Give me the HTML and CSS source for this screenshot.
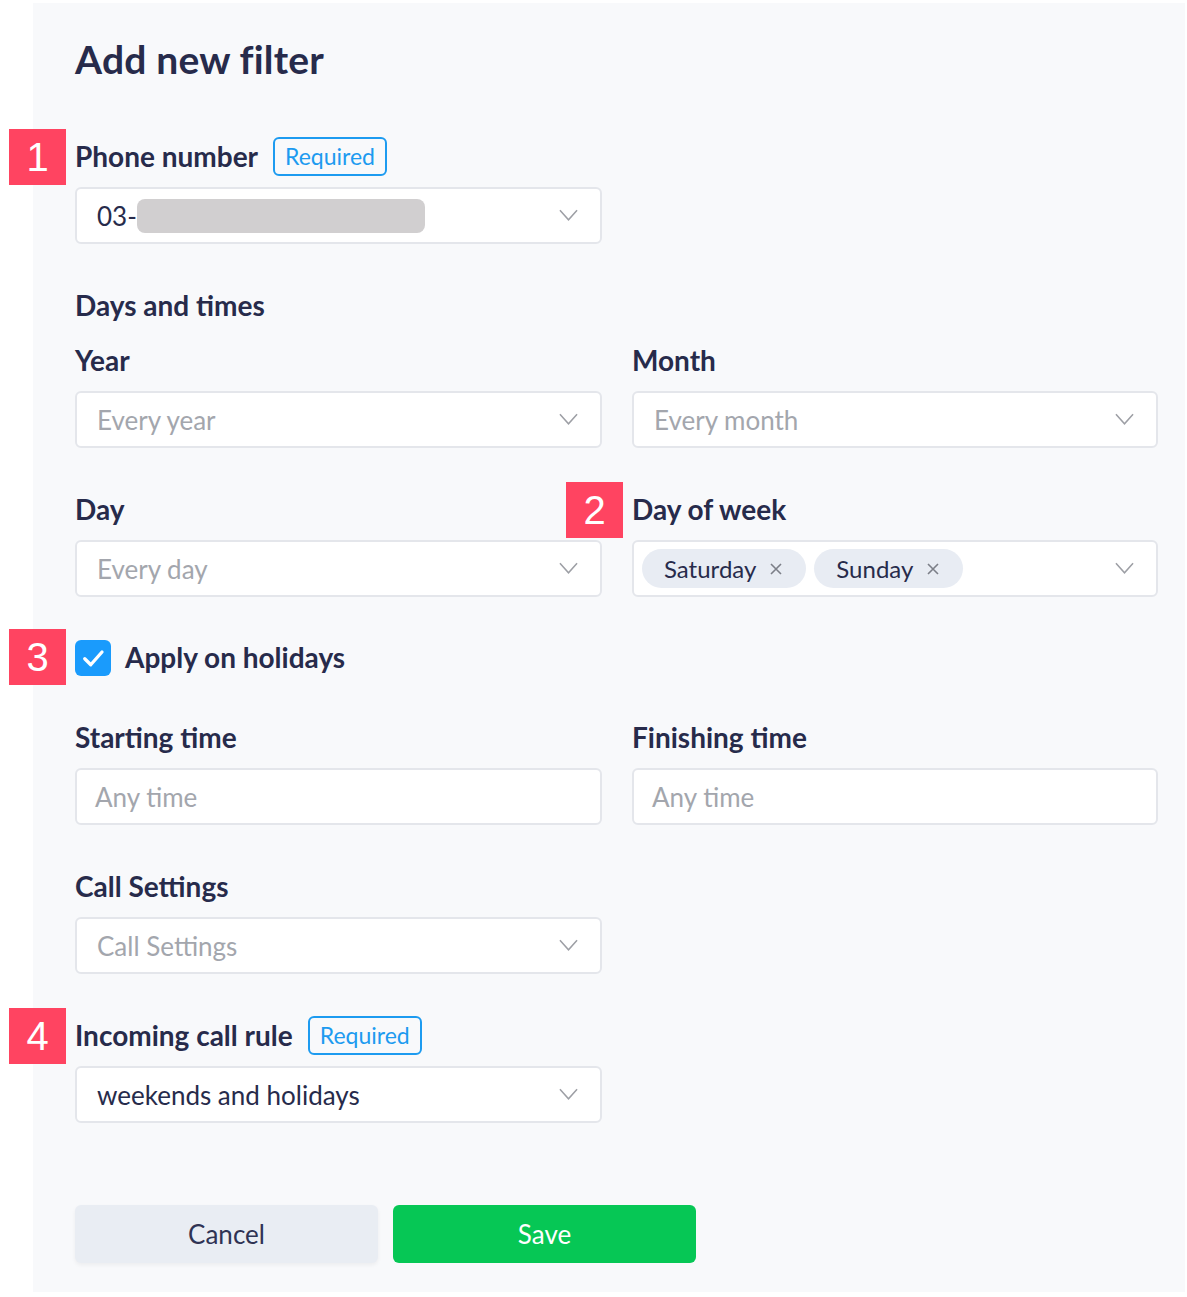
FILE: index.html
```html
<!DOCTYPE html>
<html lang="en">
<head>
    <meta charset="UTF-8">
    <meta name="viewport" content="width=device-width, initial-scale=1.0">
    <title>Add new filter</title>
    <link rel="stylesheet" href="styles.css">
</head>
<body>

    <div class="panel">
        <h1 class="title">Add new filter</h1>

        <div class="form">
            <div class="row">
                <div class="field">
                    <div class="label"><span class="marker">1</span>Phone number <span class="required">Required</span></div>
                    <div class="select">
                        <span class="value">03-</span><span class="masked"></span>
                        <svg class="chevron" viewBox="0 0 20 12"><path d="M1 1l9 10 9-10"/></svg>
                    </div>
                </div>
            </div>

            <div class="group">
                <div class="section">Days and times</div>
                <div class="row">
                    <div class="field">
                        <div class="label">Year</div>
                        <div class="select">
                            <span class="placeholder">Every year</span>
                            <svg class="chevron" viewBox="0 0 20 12"><path d="M1 1l9 10 9-10"/></svg>
                        </div>
                    </div>
                    <div class="field">
                        <div class="label">Month</div>
                        <div class="select">
                            <span class="placeholder">Every month</span>
                            <svg class="chevron" viewBox="0 0 20 12"><path d="M1 1l9 10 9-10"/></svg>
                        </div>
                    </div>
                </div>
            </div>

            <div class="row">
                <div class="field">
                    <div class="label">Day</div>
                    <div class="select">
                        <span class="placeholder">Every day</span>
                        <svg class="chevron" viewBox="0 0 20 12"><path d="M1 1l9 10 9-10"/></svg>
                    </div>
                </div>
                <div class="field">
                    <div class="label"><span class="marker">2</span>Day of week</div>
                    <div class="select tags">
                        <span class="tag">Saturday <svg class="close" viewBox="0 0 12 12"><path d="M1 1l10 10M11 1L1 11"/></svg></span>
                        <span class="tag">Sunday <svg class="close" viewBox="0 0 12 12"><path d="M1 1l10 10M11 1L1 11"/></svg></span>
                        <svg class="chevron" viewBox="0 0 20 12"><path d="M1 1l9 10 9-10"/></svg>
                    </div>
                </div>
            </div>

            <div class="check-row">
                <span class="marker">3</span>
                <span class="checkbox">
                    <svg viewBox="0 0 20 20"><path d="M4.5 10.5l4 4 7.5-8.5"/></svg>
                </span>
                <span class="check-label">Apply on holidays</span>
            </div>

            <div class="row">
                <div class="field">
                    <div class="label">Starting time</div>
                    <div class="input"><span class="placeholder">Any time</span></div>
                </div>
                <div class="field">
                    <div class="label">Finishing time</div>
                    <div class="input"><span class="placeholder">Any time</span></div>
                </div>
            </div>

            <div class="row">
                <div class="field">
                    <div class="label">Call Settings</div>
                    <div class="select">
                        <span class="placeholder">Call Settings</span>
                        <svg class="chevron" viewBox="0 0 20 12"><path d="M1 1l9 10 9-10"/></svg>
                    </div>
                </div>
            </div>

            <div class="row">
                <div class="field">
                    <div class="label"><span class="marker">4</span>Incoming call rule <span class="required">Required</span></div>
                    <div class="select">
                        <span class="value">weekends and holidays</span>
                        <svg class="chevron" viewBox="0 0 20 12"><path d="M1 1l9 10 9-10"/></svg>
                    </div>
                </div>
            </div>
        </div>

        <div class="actions">
            <button class="btn cancel">Cancel</button>
            <button class="btn save">Save</button>
        </div>
    </div>

</body>
</html>
```

FILE: styles.css
```css
body {
    margin: 0;
    background: #ffffff;
    font-family: Lato, "Noto Sans", sans-serif;
    color: #272b4b;
}

.panel {
    margin: 3px 2px 4px 33px;
    padding: 34px 27px 29px 42px;
    background: #f8f9fb;
}

.title {
    margin: 0 0 57px 0;
    font-size: 39px;
    line-height: 44px;
    font-weight: 700;
    letter-spacing: 0.2px;
}

.form {
    display: flex;
    flex-direction: column;
    gap: 43px;
}

.group {
    display: flex;
    flex-direction: column;
    gap: 15px;
}

.section {
    font-size: 28px;
    line-height: 36px;
    padding-bottom: 4px;
    font-weight: 700;
}

.row {
    display: grid;
    grid-template-columns: 527px 526px;
    gap: 30px;
}

.field {
    display: flex;
    flex-direction: column;
    gap: 9px;
}

.label {
    position: relative;
    display: flex;
    align-items: center;
    height: 36px;
    padding-bottom: 4px;
    font-size: 28px;
    font-weight: 700;
}

.required {
    margin-left: 15px;
    height: 35px;
    padding: 0 10px;
    display: flex;
    align-items: center;
    border: 2px solid #1d9bf0;
    border-radius: 6px;
    color: #1d9bf0;
    font-size: 23px;
    font-weight: 400;
}

.marker {
    position: absolute;
    left: -66px;
    top: -9px;
    width: 57px;
    height: 56px;
    display: flex;
    align-items: center;
    justify-content: center;
    background: #ff4461;
    color: #ffffff;
    font-family: "Liberation Sans", Arial, sans-serif;
    font-size: 40px;
    font-weight: 400;
}

.select, .input {
    position: relative;
    height: 57px;
    box-sizing: border-box;
    display: flex;
    align-items: center;
    padding: 0 20px;
    background: #ffffff;
    border: 2px solid #e4e6eb;
    border-radius: 6px;
    font-size: 26px;
}

.input {
    padding: 0 18px;
}

.value {
    color: #272b4b;
}

.placeholder {
    color: #a3a6ad;
}

.masked {
    width: 288px;
    height: 34px;
    background: #d1cfd0;
    border-radius: 8px;
}

.chevron {
    position: absolute;
    right: 22px;
    top: 20px;
    width: 19px;
    height: 12px;
    fill: none;
    stroke: #9d9fa5;
    stroke-width: 1.6;
}

.select.tags {
    padding: 0 8px;
    gap: 8px;
}

.tag {
    display: flex;
    align-items: center;
    gap: 14px;
    height: 39px;
    padding: 0 24px 0 22px;
    background: #e8ecf3;
    border-radius: 20px;
    font-size: 24px;
}

.close {
    width: 12px;
    height: 12px;
    fill: none;
    stroke: #7c7f88;
    stroke-width: 1.6;
}

.check-row {
    position: relative;
    display: flex;
    align-items: center;
    gap: 14px;
    height: 36px;
}

.check-row .marker {
    top: -11px;
}

.checkbox {
    width: 36px;
    height: 36px;
    border-radius: 6px;
    background: #1a9bfc;
    display: flex;
    align-items: center;
    justify-content: center;
}

.checkbox svg {
    width: 30px;
    height: 30px;
    fill: none;
    stroke: #ffffff;
    stroke-width: 2.2;
    stroke-linecap: round;
    stroke-linejoin: round;
}

.check-label {
    font-size: 28px;
    font-weight: 700;
    padding-bottom: 3px;
}

.actions {
    display: flex;
    gap: 15px;
    margin-top: 82px;
}

.btn {
    width: 303px;
    height: 58px;
    border: none;
    border-radius: 6px;
    font-family: Lato, "Noto Sans", sans-serif;
    font-size: 26px;
    cursor: pointer;
}

.cancel {
    background: #e9edf3;
    color: #2f3354;
    box-shadow: 0 2px 4px rgba(0, 0, 0, 0.05);
}

.save {
    background: #06c755;
    color: #ffffff;
}
```
